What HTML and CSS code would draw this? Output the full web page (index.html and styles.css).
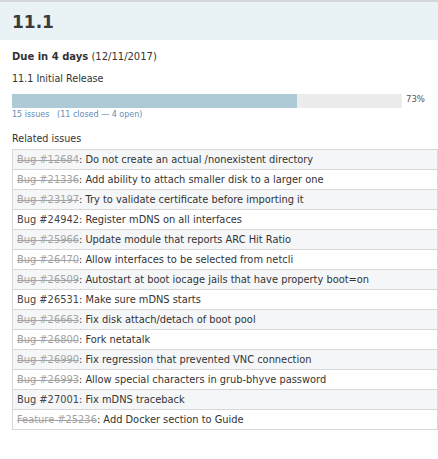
FILE: index.html
```html
<!DOCTYPE html>
<html>
<head>
<meta charset="utf-8">
<link rel="stylesheet" href="styles.css">
</head>
<body>
<div class="header"><h2 class="title">11.1</h2></div>
<div class="content">
  <p class="due"><strong>Due in 4 days</strong> (12/11/2017)</p>
  <p class="desc">11.1 Initial Release</p>
  <div class="progress-row">
    <div class="progress"><div class="done" style="width:73%"></div></div>
    <span class="pct">73%</span>
  </div>
  <p class="counts"><a href="#">15 issues</a>&nbsp;&nbsp; (<a href="#">11 closed</a> — <a href="#">4 open</a>)</p>
  <p class="related">Related issues</p>
  <div class="issues">
    <div class="row odd"><a class="closed" href="#">Bug #12684</a>: Do not create an actual /nonexistent directory</div>
    <div class="row even"><a class="closed" href="#">Bug #21336</a>: Add ability to attach smaller disk to a larger one</div>
    <div class="row odd"><a class="closed" href="#">Bug #23197</a>: Try to validate certificate before importing it</div>
    <div class="row even"><a class="open" href="#">Bug #24942</a>: Register mDNS on all interfaces</div>
    <div class="row odd"><a class="closed" href="#">Bug #25966</a>: Update module that reports ARC Hit Ratio</div>
    <div class="row even"><a class="closed" href="#">Bug #26470</a>: Allow interfaces to be selected from netcli</div>
    <div class="row odd"><a class="closed" href="#">Bug #26509</a>: Autostart at boot iocage jails that have property boot=on</div>
    <div class="row even"><a class="open" href="#">Bug #26531</a>: Make sure mDNS starts</div>
    <div class="row odd"><a class="closed" href="#">Bug #26663</a>: Fix disk attach/detach of boot pool</div>
    <div class="row even"><a class="closed" href="#">Bug #26800</a>: Fork netatalk</div>
    <div class="row odd"><a class="closed" href="#">Bug #26990</a>: Fix regression that prevented VNC connection</div>
    <div class="row even"><a class="closed" href="#">Bug #26993</a>: Allow special characters in grub-bhyve password</div>
    <div class="row odd"><a class="open" href="#">Bug #27001</a>: Fix mDNS traceback</div>
    <div class="row even"><a class="closed" href="#">Feature #25236</a>: Add Docker section to Guide</div>
  </div>
</div>
</body>
</html>
```
FILE: styles.css
```css
html, body {
  margin: 0;
  padding: 0;
  background: #fff;
}
body {
  font-family: "DejaVu Sans", Verdana, sans-serif;
  font-size: 9.6px;
  color: #333;
}
.header {
  border-top: 2px solid #d4d6d8;
  background: #e9f2f5;
  height: 38px;
  padding-left: 12px;
  display: flex;
  align-items: center;
}
.title {
  margin: 0;
  font-size: 17px;
  font-weight: bold;
  color: #3a3a3a;
  line-height: 20px;
  padding-top: 1px;
}
.content {
  padding-left: 12px;
}
p {
  margin: 0;
}
.due {
  margin-top: 10px;
  line-height: 14px;
  font-size: 10px;
}
.desc {
  margin-top: 8px;
  line-height: 14px;
}
.progress-row {
  margin-top: 8px;
  display: flex;
  align-items: flex-start;
}
.progress {
  width: 390px;
  height: 14px;
  background: #ececec;
}
.done {
  height: 14px;
  background: #adcad6;
}
.pct {
  margin-left: 4px;
  font-size: 8.5px;
  line-height: 10px;
  color: #555;
}
.counts {
  margin-top: 1px;
  line-height: 12px;
  font-size: 8px;
  color: #628db6;
}
.counts a {
  color: #628db6;
  text-decoration: none;
}
.related {
  margin-top: 11px;
  line-height: 14px;
}
.issues {
  margin-top: 3px;
  width: 426px;
  box-sizing: border-box;
  border: 1px solid #d7d7d7;
  border-top: none;
  font-size: 9.85px;
}
.row {
  box-sizing: border-box;
  height: 20px;
  border-top: 1px solid #d7d7d7;
  padding: 1px 0 0 4px;
  line-height: 18px;
  white-space: nowrap;
  overflow: hidden;
}
.row.odd {
  background: #f5f6f8;
}
.row.even {
  background: #fff;
}
.row a {
  text-decoration: none;
}
.row a.closed {
  color: #a3a3a3;
  text-decoration: line-through;
}
.row a.open {
  color: #444;
}
```
